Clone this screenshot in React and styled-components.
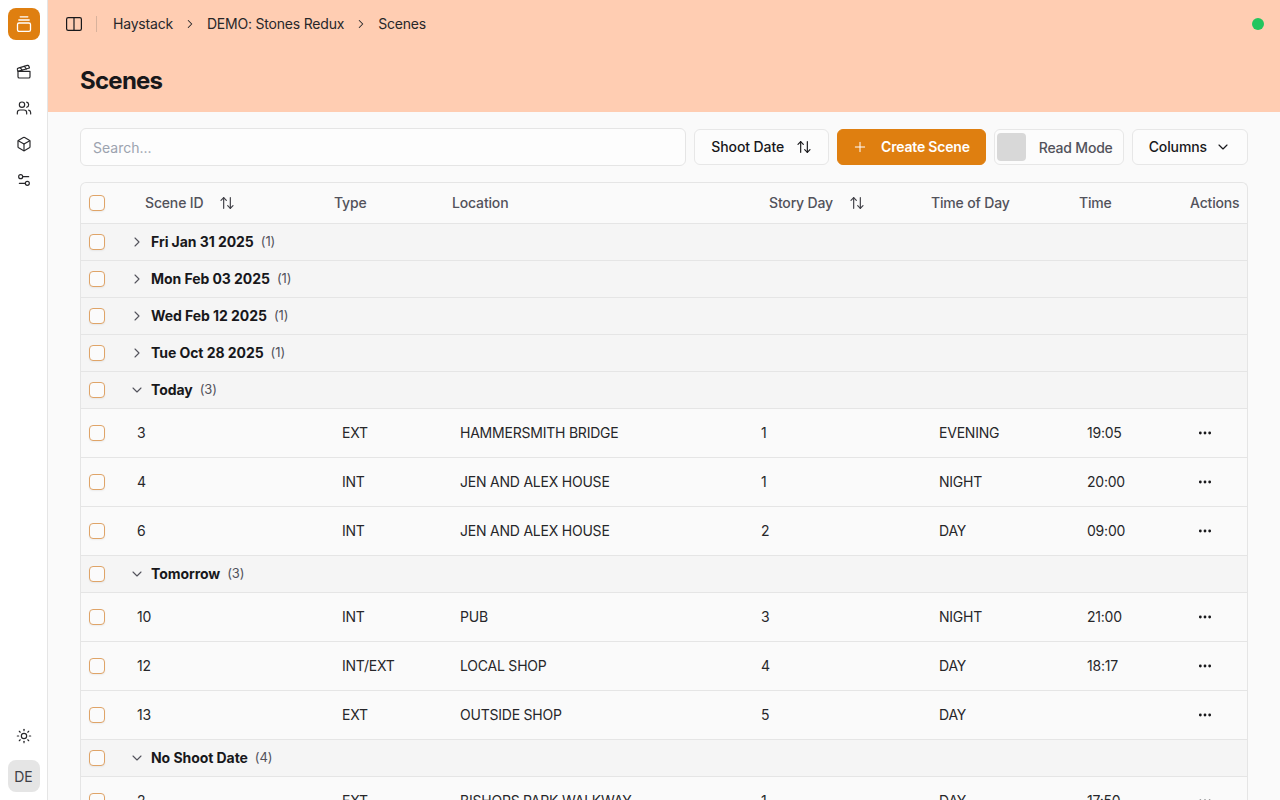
import React from "react";
import styled, { createGlobalStyle } from "styled-components";
import {
  ArrowUpDown,
  Box,
  ChevronDown,
  ChevronRight,
  Clapperboard,
  Ellipsis,
  Plus,
  Settings2,
  Sun,
  Users,
} from "lucide-react";

const GlobalStyle = createGlobalStyle`
  html, body {
    margin: 0;
    height: 100%;
    overflow: hidden;
  }
  body {
    font-family: Inter, "Liberation Sans", sans-serif;
    background: #fafafa;
    color: #18181b;
  }
  * {
    box-sizing: border-box;
  }
`;

const Shell = styled.div`
  display: flex;
  height: 800px;
  overflow: hidden;
`;

const Sidebar = styled.aside`
  width: 48px;
  flex: none;
  display: flex;
  flex-direction: column;
  align-items: center;
  padding: 8px 0;
  background: #fff;
  border-right: 1px solid #e5e5e5;
`;

const Logo = styled.div`
  width: 32px;
  height: 32px;
  border-radius: 8px;
  background: #df7f10;
  color: #fff;
  display: flex;
  align-items: center;
  justify-content: center;
`;

const SideNav = styled.nav`
  display: flex;
  flex-direction: column;
  margin-top: 14px;
`;

const SideItem = styled.div`
  width: 32px;
  height: 36px;
  display: flex;
  align-items: center;
  justify-content: center;
  color: #27272a;
`;

const SideFooter = styled.div`
  margin-top: auto;
  display: flex;
  flex-direction: column;
  align-items: center;
  gap: 6px;
`;

const Avatar = styled.div`
  width: 32px;
  height: 32px;
  border-radius: 8px;
  background: #e5e5e5;
  color: #3f3f46;
  font-size: 14px;
  display: flex;
  align-items: center;
  justify-content: center;
`;

const Main = styled.main`
  flex: 1;
  min-width: 0;
`;

const Header = styled.header`
  height: 112px;
  background: #ffcdb2;
  padding: 0 16px 0 18px;
`;

const TopBar = styled.div`
  height: 48px;
  display: flex;
  align-items: center;
  color: #27272a;
  font-size: 14px;
  letter-spacing: -0.2px;
`;

const Divider = styled.span`
  width: 1px;
  height: 16px;
  background: #d8b29c;
  margin: 0 16px 0 14px;
`;

const Crumb = styled.span`
  line-height: 20px;
`;

const CrumbSep = styled.span`
  display: flex;
  margin: 0 10px;
`;

const StatusDot = styled.span`
  width: 12px;
  height: 12px;
  margin-left: auto;
  border-radius: 50%;
  background: #22c55e;
`;

const Title = styled.h1`
  margin: 0;
  padding: 15px 0 0 14px;
  font-size: 24px;
  line-height: 36px;
  font-weight: 700;
  letter-spacing: -0.75px;
  color: #18181b;
`;

const Content = styled.div`
  padding: 16px 32px 0;
`;

const Toolbar = styled.div`
  display: flex;
  align-items: center;
  gap: 8px;
  margin-bottom: 16px;
`;

const Search = styled.input`
  flex: 1;
  min-width: 0;
  height: 38px;
  padding: 0 12px;
  border: 1px solid #e5e5e5;
  border-radius: 6px;
  background: #fdfdfd;
  font: 14px Inter, "Liberation Sans", sans-serif;
  outline: none;

  &::placeholder {
    color: #9ca3af;
    opacity: 1;
  }
`;

const Button = styled.button`
  height: 36px;
  display: flex;
  align-items: center;
  padding: 0 16px 2px;
  border: 1px solid #e7e7e7;
  border-radius: 6px;
  background: #fcfcfc;
  color: #18181b;
  font: 500 14px Inter, "Liberation Sans", sans-serif;
  letter-spacing: -0.1px;
  white-space: nowrap;

  svg {
    position: relative;
    top: 1px;
  }
`;

const PrimaryButton = styled(Button)`
  border-color: #df7f10;
  background: #df7f10;
  color: #fff;
  font-weight: 600;
  letter-spacing: -0.2px;
  padding: 0 15px 2px 14px;
`;

const ReadMode = styled(Button)`
  padding: 0 10px 0 2px;
  color: #52525b;
  letter-spacing: -0.2px;
`;

const ReadSwatch = styled.span`
  width: 29px;
  height: 28px;
  border-radius: 4px;
  background: #d8d8d8;
  margin-right: 13px;
`;

const ButtonIcon = styled.span`
  display: flex;
  margin-left: ${(p) => p.$left || 0}px;
  margin-right: ${(p) => p.$right || 0}px;
`;

const Table = styled.div`
  border: 1px solid #e5e5e5;
  border-bottom: 0;
  border-radius: 6px 6px 0 0;
  background: #fafafa;
`;

const columns = "40px 205px 118px 301px 178px 148px 111px 65px";

const HeadRow = styled.div`
  display: grid;
  grid-template-columns: ${columns};
  height: 41px;
  align-items: center;
  border-bottom: 1px solid #e5e5e5;
  color: #52525b;
  font-size: 14px;
  font-weight: 500;
  letter-spacing: -0.16px;
`;

const HeadCell = styled.div`
  display: flex;
  align-items: center;
  padding-left: ${(p) => (p.$sortable ? 24 : 8)}px;
  padding-bottom: 2px;
  white-space: nowrap;
`;

const SortIcon = styled.span`
  display: flex;
  position: relative;
  top: 1px;
  margin-left: 16px;
  color: #3f3f46;
`;

const CheckCell = styled.div`
  display: flex;
  padding-left: 8px;
`;

const Checkbox = styled.span`
  width: 16px;
  height: 16px;
  border: 1px solid #dfa468;
  border-radius: 4px;
  background: #fbfbfb;
  box-shadow: 0 1px 2px rgba(0, 0, 0, 0.06);
`;

const GroupRow = styled.div`
  display: flex;
  align-items: center;
  height: 37px;
  background: #f5f5f5;
  border-bottom: 1px solid #e5e5e5;
  font-size: 14px;
`;

const GroupToggle = styled.span`
  display: flex;
  margin-left: 24px;
  margin-right: 6px;
  color: #52525b;
`;

const GroupName = styled.span`
  padding-bottom: 2px;
  font-weight: 700;
  letter-spacing: -0.06px;
  color: #18181b;
`;

const GroupCount = styled.span`
  margin-left: 7px;
  padding-bottom: 2px;
  font-size: 13px;
  letter-spacing: -0.1px;
  color: #52525b;
`;

const DataRow = styled.div`
  display: grid;
  grid-template-columns: ${columns};
  height: 49px;
  align-items: center;
  border-bottom: 1px solid #e5e5e5;
  font-size: 14px;
  letter-spacing: -0.22px;
  color: #27272a;
`;

const DataCell = styled.div`
  padding-left: 16px;
  padding-bottom: 2px;
  white-space: nowrap;
`;

const ActionCell = styled.div`
  display: flex;
  padding-left: 15px;
  color: #18181b;
`;

const groups = [
  { name: "Fri Jan 31 2025", count: 1 },
  { name: "Mon Feb 03 2025", count: 1 },
  { name: "Wed Feb 12 2025", count: 1 },
  { name: "Tue Oct 28 2025", count: 1 },
  {
    name: "Today",
    count: 3,
    rows: [
      ["3", "EXT", "HAMMERSMITH BRIDGE", "1", "EVENING", "19:05"],
      ["4", "INT", "JEN AND ALEX HOUSE", "1", "NIGHT", "20:00"],
      ["6", "INT", "JEN AND ALEX HOUSE", "2", "DAY", "09:00"],
    ],
  },
  {
    name: "Tomorrow",
    count: 3,
    rows: [
      ["10", "INT", "PUB", "3", "NIGHT", "21:00"],
      ["12", "INT/EXT", "LOCAL SHOP", "4", "DAY", "18:17"],
      ["13", "EXT", "OUTSIDE SHOP", "5", "DAY", ""],
    ],
  },
  {
    name: "No Shoot Date",
    count: 4,
    rows: [["2", "EXT", "BISHOPS PARK WALKWAY", "1", "DAY", "17:50"]],
  },
];

function LogoMark() {
  return (
    <svg width="16" height="18" viewBox="0 0 16 18" fill="none" stroke="currentColor" strokeWidth="1.3" strokeLinecap="round">
      <path d="M4.2 1.8h7.6" />
      <path d="M2.8 5h10.4" />
      <rect x="1.5" y="8" width="13" height="8.4" rx="1.6" />
    </svg>
  );
}

function PanelIcon() {
  return (
    <svg width="16" height="14" viewBox="0 0 16 14" fill="none" stroke="#18181b" strokeWidth="1.2">
      <rect x="0.6" y="0.6" width="14.8" height="12.8" rx="1.6" />
      <path d="M8 0.6v12.8" />
    </svg>
  );
}

function Group({ group }) {
  const Toggle = group.rows ? ChevronDown : ChevronRight;
  return (
    <>
      <GroupRow>
        <CheckCell>
          <Checkbox />
        </CheckCell>
        <GroupToggle>
          <Toggle size={16} strokeWidth={1.6} />
        </GroupToggle>
        <GroupName>{group.name}</GroupName>
        <GroupCount>({group.count})</GroupCount>
      </GroupRow>
      {(group.rows || []).map((row) => (
        <DataRow key={row[0]}>
          <CheckCell>
            <Checkbox />
          </CheckCell>
          {row.map((value, i) => (
            <DataCell key={i}>{value}</DataCell>
          ))}
          <ActionCell>
            <Ellipsis size={16} strokeWidth={2.2} />
          </ActionCell>
        </DataRow>
      ))}
    </>
  );
}

export default function App() {
  return (
    <Shell>
      <GlobalStyle />
      <Sidebar>
        <Logo>
          <LogoMark />
        </Logo>
        <SideNav>
          <SideItem>
            <Clapperboard size={16} strokeWidth={1.75} />
          </SideItem>
          <SideItem>
            <Users size={16} strokeWidth={1.75} />
          </SideItem>
          <SideItem>
            <Box size={16} strokeWidth={1.75} />
          </SideItem>
          <SideItem>
            <Settings2 size={16} strokeWidth={1.75} />
          </SideItem>
        </SideNav>
        <SideFooter>
          <SideItem>
            <Sun size={16} strokeWidth={1.75} />
          </SideItem>
          <Avatar>DE</Avatar>
        </SideFooter>
      </Sidebar>
      <Main>
        <Header>
          <TopBar>
            <PanelIcon />
            <Divider />
            <Crumb>Haystack</Crumb>
            <CrumbSep>
              <ChevronRight size={14} strokeWidth={1.75} />
            </CrumbSep>
            <Crumb>DEMO: Stones Redux</Crumb>
            <CrumbSep>
              <ChevronRight size={14} strokeWidth={1.75} />
            </CrumbSep>
            <Crumb>Scenes</Crumb>
            <StatusDot />
          </TopBar>
          <Title>Scenes</Title>
        </Header>
        <Content>
          <Toolbar>
            <Search placeholder="Search..." />
            <Button>
              Shoot Date
              <ButtonIcon $left={12}>
                <ArrowUpDown size={16} strokeWidth={1.75} />
              </ButtonIcon>
            </Button>
            <PrimaryButton>
              <ButtonIcon $right={13}>
                <Plus size={16} strokeWidth={1.5} />
              </ButtonIcon>
              Create Scene
            </PrimaryButton>
            <ReadMode>
              <ReadSwatch />
              Read Mode
            </ReadMode>
            <Button>
              Columns
              <ButtonIcon $left={8}>
                <ChevronDown size={16} strokeWidth={1.75} />
              </ButtonIcon>
            </Button>
          </Toolbar>
          <Table>
            <HeadRow>
              <CheckCell>
                <Checkbox />
              </CheckCell>
              <HeadCell $sortable>
                Scene ID
                <SortIcon>
                  <ArrowUpDown size={16} strokeWidth={1.75} />
                </SortIcon>
              </HeadCell>
              <HeadCell>Type</HeadCell>
              <HeadCell>Location</HeadCell>
              <HeadCell $sortable>
                Story Day
                <SortIcon>
                  <ArrowUpDown size={16} strokeWidth={1.75} />
                </SortIcon>
              </HeadCell>
              <HeadCell>Time of Day</HeadCell>
              <HeadCell>Time</HeadCell>
              <HeadCell>Actions</HeadCell>
            </HeadRow>
            {groups.map((group) => (
              <Group key={group.name} group={group} />
            ))}
          </Table>
        </Content>
      </Main>
    </Shell>
  );
}
